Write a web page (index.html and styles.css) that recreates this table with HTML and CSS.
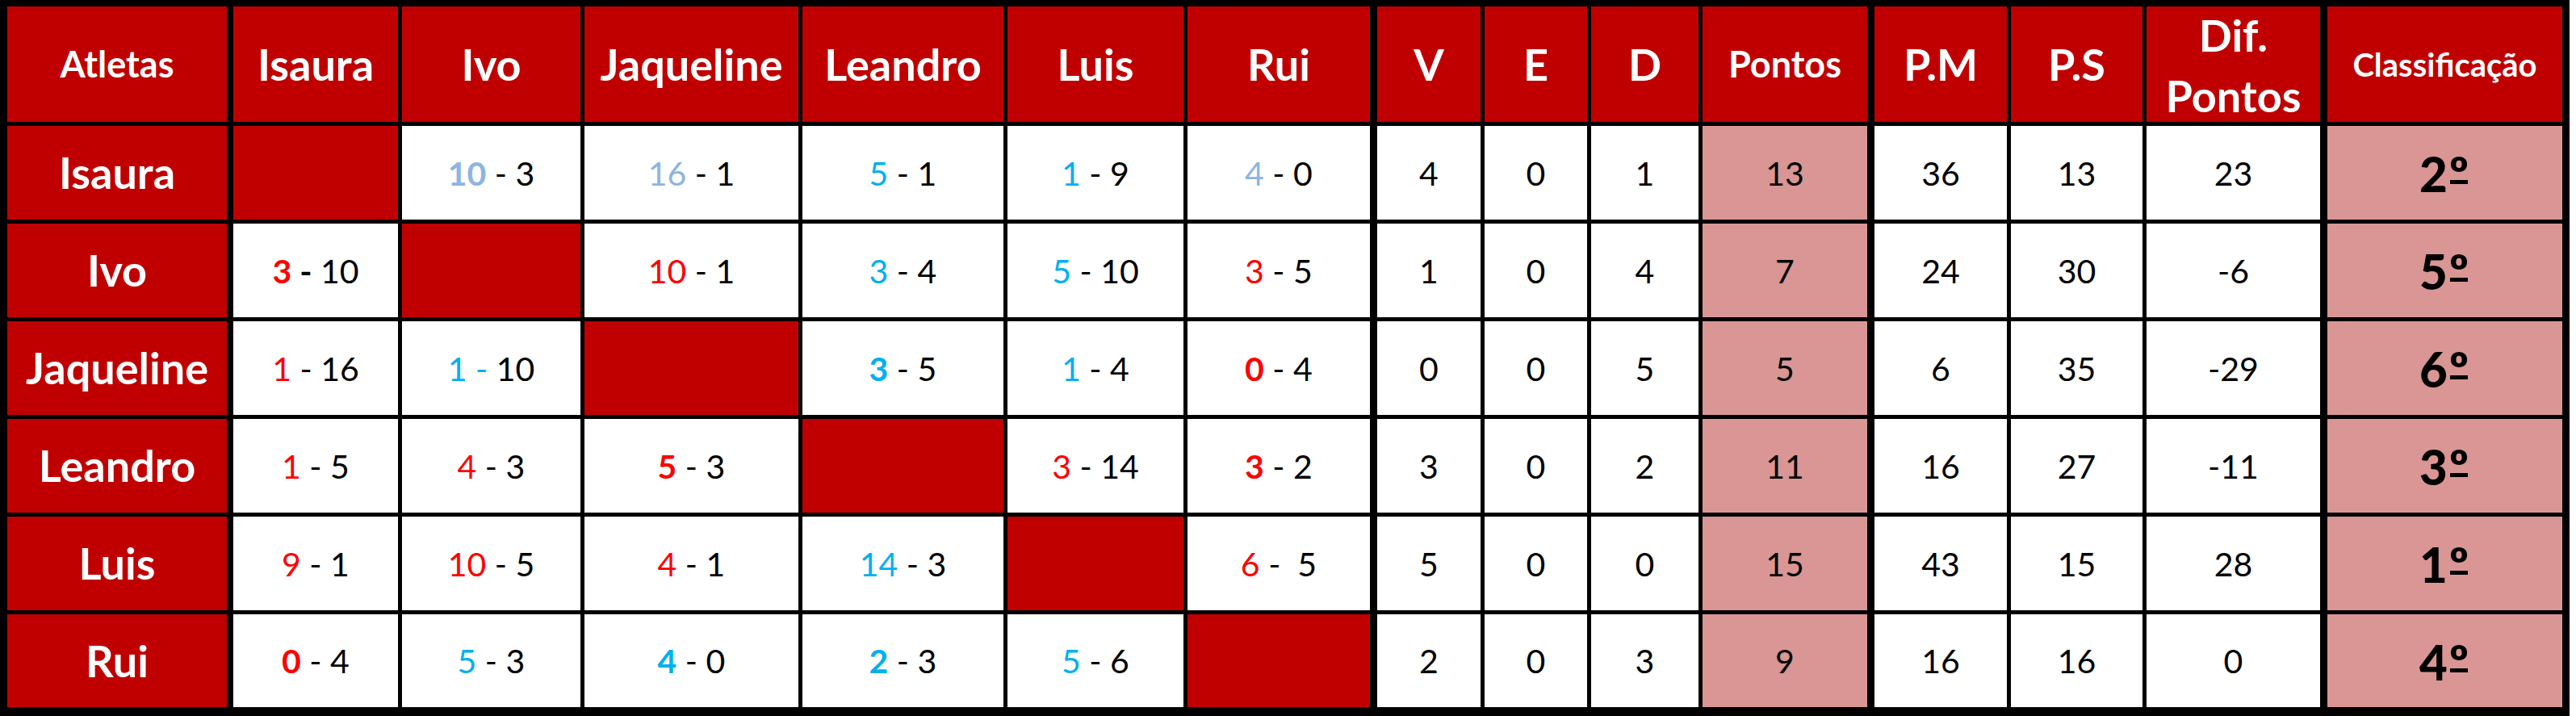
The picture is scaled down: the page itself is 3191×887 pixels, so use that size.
FILE: index.html
```html
<!DOCTYPE html>
<html lang="pt">
<head>
<meta charset="utf-8">
<title>Classificação</title>
<link rel="stylesheet" href="styles.css">
</head>
<body>
<div class="board">
  <div class="row head">
    <div class="c h sm">Atletas</div>
    <div class="c h">Isaura</div>
    <div class="c h">Ivo</div>
    <div class="c h">Jaqueline</div>
    <div class="c h">Leandro</div>
    <div class="c h">Luis</div>
    <div class="c h">Rui</div>
    <div class="c h">V</div>
    <div class="c h">E</div>
    <div class="c h">D</div>
    <div class="c h sm">Pontos</div>
    <div class="c h">P.M</div>
    <div class="c h">P.S</div>
    <div class="c h two">Dif.<br>Pontos</div>
    <div class="c h xs">Classificação</div>
  </div>

  <div class="row">
    <div class="c n">Isaura</div>
    <div class="c x"></div>
    <div class="c w"><b class="lb">10</b> - 3</div>
    <div class="c w"><span class="lb">16</span> - 1</div>
    <div class="c w"><span class="cy">5</span> - 1</div>
    <div class="c w"><span class="cy">1</span> - 9</div>
    <div class="c w"><span class="lb">4</span> - 0</div>
    <div class="c w">4</div>
    <div class="c w">0</div>
    <div class="c w">1</div>
    <div class="c p">13</div>
    <div class="c w">36</div>
    <div class="c w">13</div>
    <div class="c w">23</div>
    <div class="c p rk">2<span class="ord">º</span></div>
  </div>

  <div class="row">
    <div class="c n">Ivo</div>
    <div class="c w"><b><span class="rd">3</span> -</b> 10</div>
    <div class="c x"></div>
    <div class="c w"><span class="rd">10</span> - 1</div>
    <div class="c w"><span class="cy">3</span> - 4</div>
    <div class="c w"><span class="cy">5</span> - 10</div>
    <div class="c w"><span class="rd">3</span> - 5</div>
    <div class="c w">1</div>
    <div class="c w">0</div>
    <div class="c w">4</div>
    <div class="c p">7</div>
    <div class="c w">24</div>
    <div class="c w">30</div>
    <div class="c w">-6</div>
    <div class="c p rk">5<span class="ord">º</span></div>
  </div>

  <div class="row">
    <div class="c n">Jaqueline</div>
    <div class="c w"><span class="rd">1</span> - 16</div>
    <div class="c w"><span class="cy">1 -</span> 10</div>
    <div class="c x"></div>
    <div class="c w"><b class="cy">3</b> - 5</div>
    <div class="c w"><span class="cy">1</span> - 4</div>
    <div class="c w"><b class="rd">0</b> - 4</div>
    <div class="c w">0</div>
    <div class="c w">0</div>
    <div class="c w">5</div>
    <div class="c p">5</div>
    <div class="c w">6</div>
    <div class="c w">35</div>
    <div class="c w">-29</div>
    <div class="c p rk">6<span class="ord">º</span></div>
  </div>

  <div class="row">
    <div class="c n">Leandro</div>
    <div class="c w"><span class="rd">1</span> - 5</div>
    <div class="c w"><span class="rd">4</span> - 3</div>
    <div class="c w"><b class="rd">5</b> - 3</div>
    <div class="c x"></div>
    <div class="c w"><span class="rd">3</span> - 14</div>
    <div class="c w"><b class="rd">3</b> - 2</div>
    <div class="c w">3</div>
    <div class="c w">0</div>
    <div class="c w">2</div>
    <div class="c p">11</div>
    <div class="c w">16</div>
    <div class="c w">27</div>
    <div class="c w">-11</div>
    <div class="c p rk">3<span class="ord">º</span></div>
  </div>

  <div class="row">
    <div class="c n">Luis</div>
    <div class="c w"><span class="rd">9</span> - 1</div>
    <div class="c w"><span class="rd">10</span> - 5</div>
    <div class="c w"><span class="rd">4</span> - 1</div>
    <div class="c w"><span class="cy">14</span> - 3</div>
    <div class="c x"></div>
    <div class="c w"><span class="rd">6</span> -&nbsp; 5</div>
    <div class="c w">5</div>
    <div class="c w">0</div>
    <div class="c w">0</div>
    <div class="c p">15</div>
    <div class="c w">43</div>
    <div class="c w">15</div>
    <div class="c w">28</div>
    <div class="c p rk">1<span class="ord">º</span></div>
  </div>

  <div class="row">
    <div class="c n">Rui</div>
    <div class="c w"><b class="rd">0</b> - 4</div>
    <div class="c w"><span class="cy">5</span> - 3</div>
    <div class="c w"><b class="cy">4</b> - 0</div>
    <div class="c w"><b class="cy">2</b> - 3</div>
    <div class="c w"><span class="cy">5</span> - 6</div>
    <div class="c x"></div>
    <div class="c w">2</div>
    <div class="c w">0</div>
    <div class="c w">3</div>
    <div class="c p">9</div>
    <div class="c w">16</div>
    <div class="c w">16</div>
    <div class="c w">0</div>
    <div class="c p rk">4<span class="ord">º</span></div>
  </div>
</div>
</body>
</html>
```

FILE: styles.css
```css
html, body {
  margin: 0;
  padding: 0;
  background: #ffffff;
}

body {
  font-family: Lato, "Open Sans", "Liberation Sans", sans-serif;
}

.board {
  display: grid;
  width: 3183px;
  box-sizing: border-box;
  background: #000000;
  padding: 8px 9px 11px 9px;
  grid-template-columns: 272px 207px 221px 265px 249px 218px 226px 132px 127px 133px 204px 168px 163px 215px 295px;
  grid-template-rows: 143px 116px 116px 116px 116px 116px 115px;
  gap: 5px;
}

.row {
  display: contents;
}

.row > :nth-child(2) { margin-left: 3px; }
.row > :nth-child(8),
.row > :nth-child(12),
.row > :nth-child(15) { margin-left: 4px; }

.c {
  display: flex;
  align-items: center;
  justify-content: center;
  text-align: center;
  white-space: pre;
  color: #000000;
  font-size: 41px;
  font-weight: 400;
  line-height: 1;
}

.h, .n, .x {
  background: #c00000;
  color: #ffffff;
  font-weight: 700;
  font-size: 54px;
}

.h.sm { font-size: 45px; }
.h.xs { font-size: 40px; }
.h.two {
  white-space: normal;
  line-height: 75px;
  padding-top: 2px;
}

.w { background: #ffffff; }
.p { background: #da9694; }

.rk {
  font-weight: 900;
  font-size: 60px;
  align-items: baseline;
  padding-top: 29px;
  box-sizing: border-box;
}

.ord {
  display: inline-block;
  position: relative;
  padding: 0 2px;
}

.ord::after {
  content: "";
  position: absolute;
  left: 3px;
  right: 3px;
  bottom: 17px;
  height: 5px;
  background: currentColor;
}

b { font-weight: 700; }
.rd { color: #ff0000; }
.cy { color: #00b0f0; }
.lb { color: #8db4e2; }
```
